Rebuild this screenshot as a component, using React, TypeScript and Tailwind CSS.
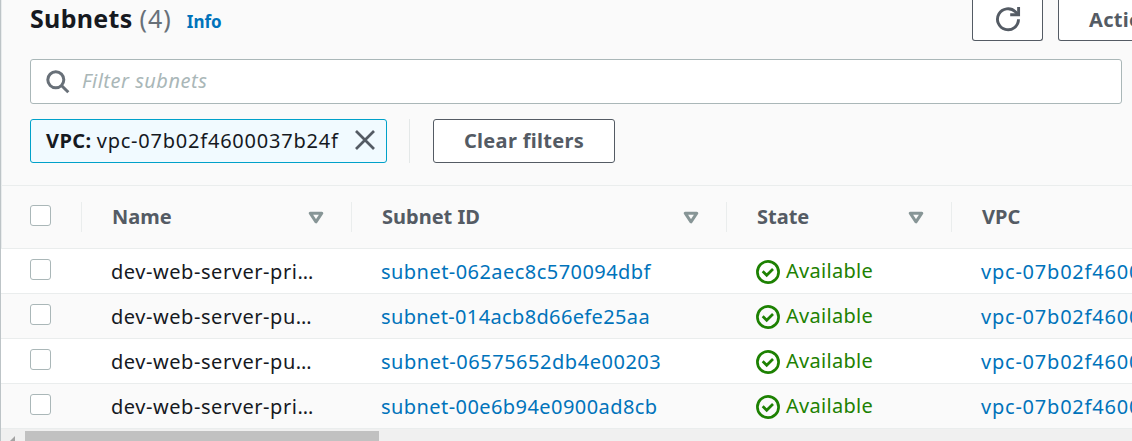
import React from "react";

type Subnet = { name: string; id: string; tracking: string };

const subnets: Subnet[] = [
  { name: "dev-web-server-pri…", id: "subnet-062aec8c570094dbf", tracking: "tracking-[0.45px]" },
  { name: "dev-web-server-pu…", id: "subnet-014acb8d66efe25aa", tracking: "tracking-[0.36px]" },
  { name: "dev-web-server-pu…", id: "subnet-06575652db4e00203", tracking: "tracking-[0.53px]" },
  { name: "dev-web-server-pri…", id: "subnet-00e6b94e0900ad8cb", tracking: "tracking-[0.43px]" },
];

const columns = "grid grid-cols-[80px_270px_375px_225px_400px]";

function Checkbox() {
  return <span className="block size-[21px] rounded-[3px] border border-[#aab7b8] bg-white" />;
}

function SortIcon() {
  return (
    <svg width="16" height="13" viewBox="0 0 16 13" className="shrink-0">
      <path d="M2.2 2.2h11.6L8 10.8z" fill="none" stroke="#879596" strokeWidth="3" strokeLinejoin="round" />
    </svg>
  );
}

function CheckIcon() {
  return (
    <svg width="24" height="24" viewBox="0 0 24 24" className="mt-[2px] shrink-0" fill="none" stroke="#1d8102" strokeWidth="2.7">
      <circle cx="12" cy="12" r="10.6" />
      <path d="M6.7 11.3l4 4L17 9" />
    </svg>
  );
}

function HeaderCell({ label, sortable = true }: { label: string; sortable?: boolean }) {
  return (
    <div className="my-4 flex items-center justify-between border-l border-[#eaeded] pr-[27px] pl-[30px]">
      <span className="text-[20px] leading-[28px] font-bold text-[#545b64]">{label}</span>
      {sortable && <SortIcon />}
    </div>
  );
}

export default function App() {
  return (
    <div className="flex h-[441px] w-[1132px] overflow-hidden bg-[#fafafa] font-['Noto_Sans',sans-serif] text-[20px] text-[#16191f]">
      <div className="w-px shrink-0 bg-[#bdc4c7]" />
      <div className="min-w-0 flex-1 overflow-hidden shadow-[inset_1px_0_0_#e9eced]">
        <div className="flex h-[185px] flex-col pl-[29px]">
          <div className="flex h-[41px] justify-between">
            <div className="flex items-baseline pt-px leading-[34px]">
              <h1 className="text-[25px] font-bold tracking-[0.3px]">Subnets</h1>
              <span className="ml-[7px] text-[25px] tracking-[1px] text-[#687078]">(4)</span>
              <a className="ml-[15px] text-[17px] font-bold text-[#0073bb]">Info</a>
            </div>
            <div className="-mr-[85px] flex gap-[15px]">
              <button className="flex h-[41px] w-[71px] items-center justify-center rounded-b-[3px] border border-t-0 border-[#545b64] bg-white">
                <svg width="26" height="26" viewBox="0 0 26 26" className="-mt-[2px]" fill="none" stroke="#545b64" strokeWidth="2.9">
                  <path d="M23.5 13.2A10.5 10.5 0 1 1 20.4 5.8L22.6 8" />
                  <path d="M23.6 1v7.7h-8.4" />
                </svg>
              </button>
              <button className="h-[41px] w-[159px] rounded-b-[3px] border border-t-0 border-[#545b64] bg-white pl-[30px] text-left leading-[36px] font-bold tracking-[0.3px] text-[#545b64]">
                Actions
              </button>
            </div>
          </div>
          <div className="mt-[18px] flex h-[45px] w-[1092px] items-center rounded-[3px] border border-[#aab7b8] bg-white pl-[15px]">
            <svg width="24" height="24" viewBox="0 0 24 24" fill="none" stroke="#687078" strokeWidth="3">
              <circle cx="9.8" cy="9.8" r="8" />
              <path d="M15.5 15.5l6.8 6.8" />
            </svg>
            <span className="ml-[12px] pb-[2px] tracking-[0.5px] text-[#aab7b8] italic">Filter subnets</span>
          </div>
          <div className="mt-[15px] flex h-[44px] items-stretch">
            <div className="flex w-[357px] items-center justify-between rounded-[3px] border border-[#00a1c9] bg-[#f1faff] pr-[11px] pl-[15px]">
              <span className="whitespace-nowrap">
                <b className="tracking-[0.4px]">VPC:</b> <span className="tracking-[0.78px]">vpc-07b02f4600037b24f</span>
              </span>
              <svg width="20" height="20" viewBox="0 0 20 20" className="-mt-[2px]" stroke="#545b64" strokeWidth="2.7">
                <path d="M1 1l18 18M19 1L1 19" />
              </svg>
            </div>
            <div className="ml-[22px] w-px bg-[#e4e8e8]" />
            <button className="ml-[23px] w-[182px] rounded-[3px] border border-[#545b64] bg-white font-bold tracking-[0.3px] text-[#545b64]">
              Clear filters
            </button>
          </div>
        </div>

        <div className={`${columns} h-[64px] border-y border-[#eaeded]`}>
          <div className="pt-[19px] pl-[29px]">
            <Checkbox />
          </div>
          <HeaderCell label="Name" />
          <HeaderCell label="Subnet ID" />
          <HeaderCell label="State" />
          <HeaderCell label="VPC" sortable={false} />
        </div>

        {subnets.map((s, i) => (
          <div
            key={s.id}
            className={`${columns} h-[45px] border-b border-[#eaeded] leading-[46px] ${i % 2 ? "bg-[#fafafa]" : "bg-white"}`}
          >
            <div className="pt-[10px] pl-[29px]">
              <Checkbox />
            </div>
            <div className="pl-[30px] tracking-[0.55px] whitespace-nowrap">{s.name}</div>
            <div className={`pl-[30px] whitespace-nowrap text-[#0073bb] ${s.tracking}`}>{s.id}</div>
            <div className="flex h-[44px] items-center pl-[30px] text-[#1d8102]">
              <CheckIcon />
              <span className="ml-[6px] leading-[44px] tracking-[0.3px]">Available</span>
            </div>
            <div className="pl-[30px] tracking-[0.78px] whitespace-nowrap text-[#0073bb]">vpc-07b02f4600037b24f</div>
          </div>
        ))}

        <div className="flex h-[12px] bg-[#f0f0f0] pt-[2px]">
          <div className="w-[24px] pt-[5px] pl-[9px]">
            <svg width="5" height="10" viewBox="0 0 5 10">
              <path d="M5 0v10L0 5z" fill="#a3a3a3" />
            </svg>
          </div>
          <div className="h-[10px] w-[354px] bg-[#c1c1c1]" />
        </div>
      </div>
    </div>
  );
}
